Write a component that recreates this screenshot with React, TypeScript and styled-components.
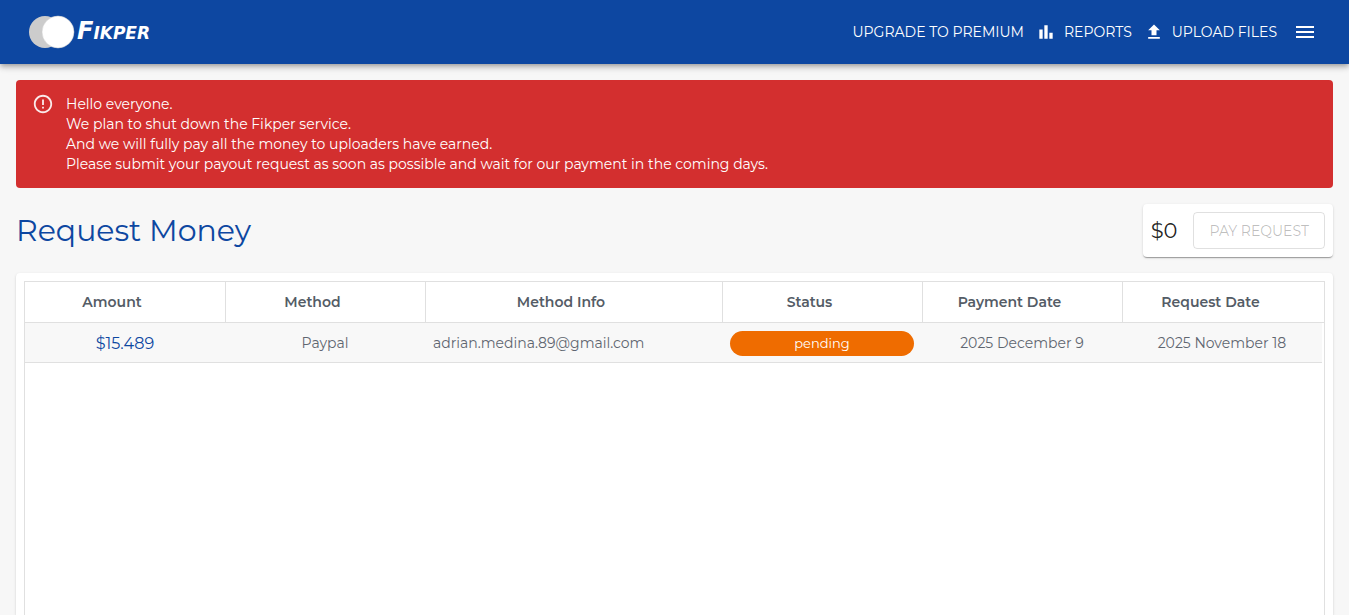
import React from "react";
import styled, { createGlobalStyle } from "styled-components";
import { MdBarChart, MdErrorOutline, MdMenu, MdUpload } from "react-icons/md";

const GlobalStyle = createGlobalStyle`
  *, *::before, *::after { box-sizing: border-box; }
  body {
    margin: 0;
    background: #f7f7f7;
    color: rgba(0, 0, 0, 0.87);
    font-family: Montserrat, Inter, sans-serif;
    font-size: 14px;
    line-height: 20px;
  }
`;

const Page = styled.div`
  display: flex;
  flex-direction: column;
  height: 100vh;
  overflow: hidden;
`;

const AppBar = styled.header`
  display: flex;
  flex: none;
  align-items: center;
  justify-content: space-between;
  height: 64px;
  padding: 0 24px 0 28px;
  background: #0d47a1;
  color: #fff;
  box-shadow: 0 2px 4px -1px rgba(0, 0, 0, 0.2), 0 4px 5px rgba(0, 0, 0, 0.14),
    0 1px 10px rgba(0, 0, 0, 0.12);
`;

const LogoLink = styled.a`
  display: flex;
  align-items: center;
  gap: 2px;
  color: #fff;
  text-decoration: none;
`;

const Wordmark = styled.div`
  font: italic bold 17px/36px "DejaVu Sans", sans-serif;

  &::first-letter { font-size: 24px; }
`;

const Nav = styled.nav`
  display: flex;
  align-items: center;
  gap: 12px;
`;

const NavLink = styled.a`
  display: flex;
  align-items: center;
  gap: 8px;
  color: #fff;
  text-decoration: none;
`;

const MenuButton = styled.button`
  display: flex;
  margin-left: -4px;
  padding: 8px;
  border: 0;
  background: none;
  color: inherit;
  cursor: pointer;
`;

const Content = styled.main`
  display: flex;
  flex: 1;
  flex-direction: column;
  gap: 16px;
  padding: 16px 16px 0;
`;

const Alert = styled.div`
  display: flex;
  gap: 12px;
  padding: 14px 16px;
  border-radius: 4px;
  background: #d32f2f;
  color: #fff;

  p { margin: 0; }
  svg { flex: none; margin-top: -1px; opacity: 0.9; }
`;

const Heading = styled.div`
  display: flex;
  align-items: center;
  justify-content: space-between;
`;

const Title = styled.h1`
  margin: 0;
  color: #0d47a1;
  font-size: 30px;
  font-weight: 400;
  line-height: 40px;
`;

const Paper = styled.section`
  padding: 8px;
  border-radius: 4px;
  background: #fff;
  box-shadow: 0 2px 1px -1px rgba(0, 0, 0, 0.2), 0 1px 1px rgba(0, 0, 0, 0.14),
    0 1px 3px rgba(0, 0, 0, 0.12);
`;

const Balance = styled(Paper)`
  display: flex;
  align-items: center;
  gap: 16px;
`;

const BalanceAmount = styled.span`
  font-size: 21px;
`;

const PayButton = styled.button`
  padding: 9px 15px 8px;
  border: 1px solid rgba(0, 0, 0, 0.12);
  border-radius: 4px;
  background: none;
  color: rgba(0, 0, 0, 0.26);
  font: 400 14px/18px Montserrat, Inter, sans-serif;
`;

const TablePaper = styled(Paper)`
  display: flex;
  flex: 1;
  padding-bottom: 0;
  border-radius: 4px 4px 0 0;
`;

const Frame = styled.div`
  flex: 1;
  border: 1px solid #e0e0e0;
  border-bottom: 0;
`;

const Table = styled.table`
  width: 100%;
  border-collapse: separate;
  border-spacing: 0;
  table-layout: fixed;
`;

const Col = styled.col<{ $width?: number }>`
  width: ${({ $width }) => ($width ? `${$width}px` : "auto")};
`;

const HeadCell = styled.th`
  height: 41px;
  padding: 0 34px 0 8px;
  border-bottom: 1px solid #e0e0e0;
  color: #545c66;
  font-size: 14px;
  font-weight: 600;

  & + & { border-left: 1px solid #e0e0e0; }
`;

const Cell = styled.td<{ $align?: string }>`
  height: 40px;
  padding: 1px 8px 0;
  border-bottom: 1px solid #e0e0e0;
  background: #f8f8f8;
  color: #5f6670;
  text-align: ${({ $align }) => $align || "center"};
`;

const AmountText = styled.span`
  display: block;
  padding-top: 2px;
  color: #0d47a1;
  font-size: 16px;
`;

const StatusChip = styled.span`
  display: block;
  border-radius: 13px;
  background: #ef6c00;
  color: #fff;
  font-size: 13px;
  line-height: 25px;
`;

const EndCell = styled.td`
  padding: 0;
`;

const messages = [
  "Hello everyone.",
  "We plan to shut down the Fikper service.",
  "And we will fully pay all the money to uploaders have earned.",
  "Please submit your payout request as soon as possible and wait for our payment in the coming days.",
];

export default function App() {
  return (
    <Page>
      <GlobalStyle />
      <AppBar>
        <LogoLink href="#" aria-label="Fikper">
          <svg width="47" height="34" viewBox="0 0 47 34" aria-hidden="true">
            <circle cx="17" cy="17" r="16" fill="#ccc" />
            <circle cx="30" cy="17" r="16" fill="#fff" stroke="#ccc" strokeWidth="0.5" />
          </svg>
          <Wordmark>FIKPER</Wordmark>
        </LogoLink>
        <Nav>
          <NavLink href="#">UPGRADE TO PREMIUM</NavLink>
          <NavLink href="#"><MdBarChart size={20} />REPORTS</NavLink>
          <NavLink href="#"><MdUpload size={20} />UPLOAD FILES</NavLink>
          <MenuButton aria-label="Menu"><MdMenu size={24} /></MenuButton>
        </Nav>
      </AppBar>
      <Content>
        <Alert role="alert">
          <MdErrorOutline size={22} />
          <div>{messages.map((m) => <p key={m}>{m}</p>)}</div>
        </Alert>
        <Heading>
          <Title>Request Money</Title>
          <Balance>
            <BalanceAmount>$0</BalanceAmount>
            <PayButton disabled>PAY REQUEST</PayButton>
          </Balance>
        </Heading>
        <TablePaper>
          <Frame>
            <Table>
              <colgroup>
                <Col $width={200} />
                <Col $width={200} />
                <Col />
                <Col $width={200} />
                <Col $width={200} />
                <Col $width={200} />
                <Col $width={2} />
              </colgroup>
              <thead>
                <tr>
                  <HeadCell>Amount</HeadCell>
                  <HeadCell>Method</HeadCell>
                  <HeadCell>Method Info</HeadCell>
                  <HeadCell>Status</HeadCell>
                  <HeadCell>Payment Date</HeadCell>
                  <HeadCell colSpan={2}>Request Date</HeadCell>
                </tr>
              </thead>
              <tbody>
                <tr>
                  <Cell><AmountText>$15.489</AmountText></Cell>
                  <Cell>Paypal</Cell>
                  <Cell $align="left">adrian.medina.89@gmail.com</Cell>
                  <Cell><StatusChip>pending</StatusChip></Cell>
                  <Cell>2025 December 9</Cell>
                  <Cell>2025 November 18</Cell>
                  <EndCell />
                </tr>
              </tbody>
            </Table>
          </Frame>
        </TablePaper>
      </Content>
    </Page>
  );
}
